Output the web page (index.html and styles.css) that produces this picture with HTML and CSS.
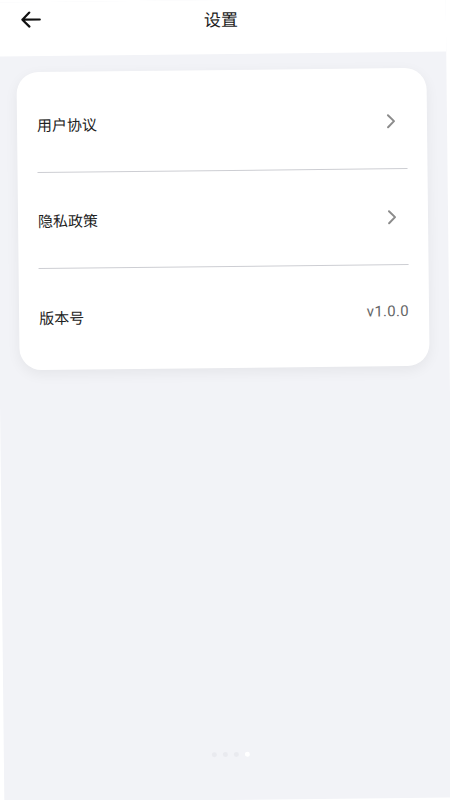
FILE: index.html
```html
<!DOCTYPE html>
<html lang="zh-CN">
<head>
    <meta charset="UTF-8">
    <meta name="viewport" content="width=device-width, initial-scale=1.0">
    <title>设置</title>
    <link rel="stylesheet" href="styles.css">
</head>
<body>

<div class="screen">
    <div class="header">
        <div class="back">
            <svg width="21" height="17" viewBox="0 0 21 17">
                <path d="M20 8.5H2.5 M9.5 1.5L2.5 8.5L9.5 15.5" fill="none" stroke="#111" stroke-width="2.2" stroke-linecap="round" stroke-linejoin="round"/>
            </svg>
        </div>
        <div class="title">设置</div>
        <div></div>
    </div>

    <div class="content">
        <div class="card">
            <div class="row">
                <span class="label">用户协议</span>
                <svg class="chevron" width="10" height="16" viewBox="0 0 10 16">
                    <polyline points="2,2 8,8 2,14" fill="none" stroke="#8c8c8c" stroke-width="2" stroke-linecap="round" stroke-linejoin="round"/>
                </svg>
            </div>
            <div class="row">
                <span class="label">隐私政策</span>
                <svg class="chevron" width="10" height="16" viewBox="0 0 10 16">
                    <polyline points="2,2 8,8 2,14" fill="none" stroke="#8c8c8c" stroke-width="2" stroke-linecap="round" stroke-linejoin="round"/>
                </svg>
            </div>
            <div class="row">
                <span class="label">版本号</span>
                <span class="value">v1.0.0</span>
            </div>
        </div>
    </div>

    <div class="dots">
        <span class="dot"></span>
        <span class="dot"></span>
        <span class="dot"></span>
        <span class="dot active"></span>
    </div>
</div>

</body>
</html>
```

FILE: styles.css
```css
/* Sahifa */
body {
    margin: 0;
    background-color: #fff;
    font-family: "Noto Sans", "Noto Sans CJK SC", sans-serif;
    overflow: hidden;
}
.screen {
    width: 450px;
    height: 800px;
    display: flex;
    flex-direction: column;
    background-color: #f2f3f7;
    transform: rotate(-0.62deg);
}

/* Sarlavha */
.header {
    height: 54px;
    box-sizing: border-box;
    padding-top: 8px;
    background-color: #fff;
    display: grid;
    grid-template-columns: 1fr auto 1fr;
    align-items: start;
}
.back {
    padding-left: 24px;
    padding-top: 1px;
}
.back svg {
    display: block;
}
.title {
    font-size: 17px;
    line-height: 24px;
    color: #1a1a1a;
}

/* Karta */
.content {
    flex: 1;
}
.card {
    margin: 16px 20px 0;
    padding: 5px 20px;
    background-color: #fff;
    border-radius: 22px;
    box-shadow: 0 4px 14px rgba(0, 0, 0, 0.06);
}
.row {
    height: 96px;
    box-sizing: border-box;
    display: flex;
    align-items: center;
    justify-content: space-between;
    border-bottom: 1px solid #cdced3;
}
.row:last-child {
    border-bottom: none;
}
.label {
    font-size: 15px;
    color: #222;
}
.chevron {
    margin-right: 11px;
}
.value {
    font-family: Roboto, "Noto Sans", sans-serif;
    font-size: 15px;
    color: #666;
    letter-spacing: 0.3px;
    margin-top: -4px;
}

/* Sahifa nuqtalari */
.dots {
    display: flex;
    justify-content: center;
    gap: 6px;
    padding-bottom: 43px;
    padding-left: 4px;
}
.dot {
    width: 5px;
    height: 5px;
    border-radius: 50%;
    background-color: #e9eaef;
}
.dot.active {
    background-color: #fff;
}
```
